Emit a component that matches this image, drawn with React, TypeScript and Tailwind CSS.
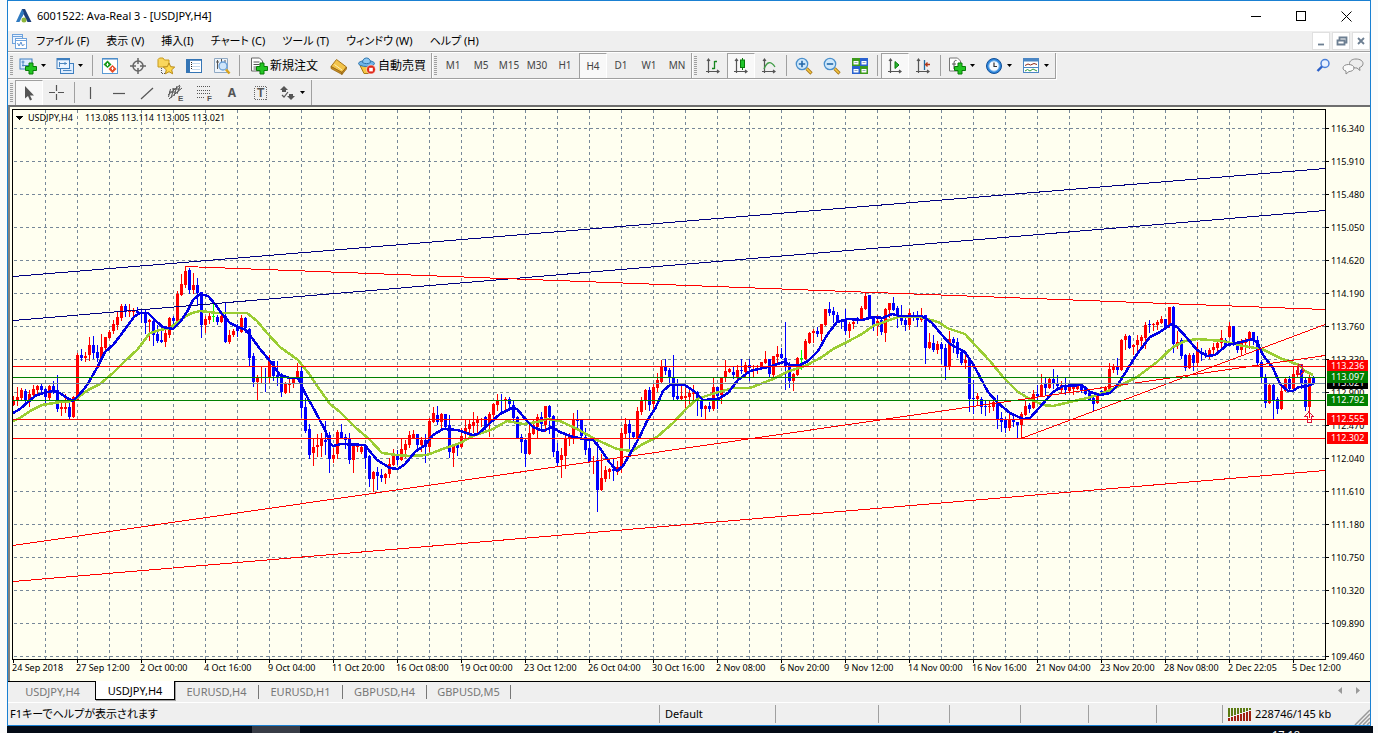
import React from 'react';

// one candle each 4px: colour (r up, b down, g doji), high, body top, body bottom, low
const CANDLES = `
r396,400,405,405 r387,397,401,405 r388,390,398,399 b389,391,401,405 r390,394,401,406 r385,389,395,395 r385,386,390,394 b383,386,390,394
b388,389,397,404 r385,386,398,399 b381,386,390,393 b375,390,409,411 r403,407,409,415 r394,407,409,412 b402,407,417,419 r396,397,417,417
r353,355,400,400 b349,355,358,360 r352,356,358,361 r337,345,355,360 b336,345,353,358 b345,352,358,361 r334,347,358,359 r337,337,348,350
r330,332,338,338 r320,324,331,333 r312,317,325,329 r304,306,318,320 b304,306,312,316 r304,310,312,316 r308,310,312,316 b307,311,313,315
b309,312,313,322 b310,314,323,333 r319,320,322,340 b317,321,335,345 b325,334,341,342 b327,340,342,342 r330,333,342,346 r317,318,335,337
b316,318,321,324 r291,294,321,322 r274,284,295,295 r266,271,285,287 b268,270,290,293 r273,285,290,293 b278,285,293,304 b292,292,325,337
r316,319,325,332 r313,316,320,323 g304,316,317,321 b315,317,322,324 r313,316,322,322 b303,316,342,342 r330,335,342,343 r329,331,335,336
b324,326,331,336 r315,318,332,332 b317,318,328,332 b328,329,358,366 b353,356,382,386 r375,378,382,400 r367,377,378,382 b368,377,378,391
r355,360,377,382 b361,361,376,380 b361,375,377,385 b373,375,392,396 r382,384,393,393 r379,383,385,392 r377,379,384,387 r363,371,379,379
b367,371,408,417 b398,407,431,432 b424,429,455,458 r439,447,453,465 r434,445,447,456 r433,438,446,456 b421,440,442,454 b432,435,459,472
r448,455,459,462 r430,432,454,458 b424,432,438,438 b434,437,440,448 b433,438,460,463 r443,446,460,472 r443,445,447,451 r445,447,452,453
b445,445,458,468 b455,456,479,486 r471,472,479,491 b467,472,476,489 b469,475,478,481 r473,474,478,483 r458,464,474,477 r449,456,465,465
b450,456,460,464 r438,449,460,460 r440,444,450,457 r431,435,445,447 r430,434,438,438 b434,434,445,451 r437,440,445,451 b434,440,447,462
r418,421,447,451 r407,413,422,422 b406,415,422,424 r413,414,422,428 b414,414,427,429 b415,425,452,457 r444,445,453,466 b445,445,448,455
r428,436,447,447 r420,428,433,440 r420,424,429,436 r412,422,426,432 r416,419,423,433 r418,419,420,426 b416,417,426,430 r412,414,424,436
r403,404,415,418 r394,400,405,410 b394,400,401,412 r397,399,400,410 b397,399,404,407 b400,405,418,420 b416,417,438,438 b434,437,442,452
b438,440,454,466 r423,433,454,454 r420,425,434,434 r414,417,427,438 b412,417,424,429 r406,406,425,431 b405,406,417,433 b415,416,452,456
b443,451,463,466 r448,455,460,477 r435,438,456,468 r433,436,438,445 r413,419,436,443 b410,419,421,430 b419,419,436,436 b428,437,450,454
b441,448,462,462 r456,461,462,473 b442,461,490,511 r454,478,490,490 r466,470,479,481 r468,469,472,478 b458,469,471,480 r461,467,472,474
r428,433,468,472 r418,424,434,438 b420,424,433,448 b432,432,437,437 r407,411,438,438 r397,400,412,414 r389,390,400,409 b387,390,405,410
r384,387,404,409 r373,380,388,391 r360,367,382,383 b359,367,371,374 b368,370,378,384 b355,377,397,399 b379,396,399,400 r384,396,399,400
r388,396,398,407 r390,393,397,403 r385,393,394,399 b391,392,400,415 b396,400,409,416 r405,406,409,419 b402,406,409,411 r378,387,409,410
b387,387,396,408 r377,378,395,403 r360,371,378,381 r368,369,372,372 b367,372,375,378 r365,370,378,378 b359,370,371,373 r362,365,372,377
b359,365,368,380 r365,369,370,376 r365,368,369,373 r362,362,368,368 r351,359,363,363 b359,359,374,377 r356,356,375,377 r346,354,357,364
b348,354,358,358 b322,358,367,389 b362,367,381,387 r373,374,381,390 r357,358,375,375 g350,358,359,369 r339,341,359,359 r332,333,343,343
r329,331,333,342 b327,331,334,336 r324,324,334,340 r309,309,325,325 b302,309,313,315 b307,311,315,322 b312,315,322,322 b319,320,322,328
b309,320,331,334 r322,324,331,337 r318,322,324,328 b317,320,321,323 r306,308,320,320 r293,296,309,309 b295,295,317,317 b316,317,326,330
r315,321,326,335 b319,320,332,334 r308,309,333,341 r303,303,310,317 b297,303,310,310 b306,308,317,327 b305,316,321,324 b317,320,325,330
r309,313,325,329 b312,315,316,320 b311,315,320,326 r308,315,320,321 b315,315,348,363 r333,342,348,348 b335,343,350,351 r341,344,350,353
b342,344,349,363 b344,348,367,379 r331,339,367,369 b337,339,343,352 b338,342,354,357 b351,352,363,364 r353,360,363,368 b358,359,399,411
b380,398,399,413 r393,396,399,404 b397,399,407,413 b400,406,407,415 r400,406,407,412 r400,402,407,410 b395,403,419,428 b412,418,422,431
b417,420,428,432 r413,419,428,430 b415,420,422,426 b422,422,425,438 r412,414,425,438 r400,406,415,415 b403,405,409,412 r390,394,408,408
b385,394,396,403 r374,385,396,396 b378,384,388,395 r377,379,388,388 b369,379,384,388 b375,383,386,390 r381,385,390,392 b377,386,390,394
r384,387,391,391 r384,387,389,394 r384,386,389,389 b384,385,390,392 b387,389,394,394 b389,393,400,400 b395,398,404,411 r395,396,403,403
b390,391,394,394 r386,388,393,393 r363,369,390,390 r364,366,370,372 b358,366,370,374 r339,340,370,370 r334,336,340,349 b335,336,348,348
r344,345,347,354 r335,340,345,350 r335,337,341,349 r322,325,338,348 b320,324,325,332 r323,324,325,330 r320,322,325,329 r316,319,323,323
b319,319,327,329 r307,307,325,327 b306,307,344,352 r331,342,344,348 b338,340,356,358 b354,355,368,370 r353,355,368,368 b353,355,363,370
r342,351,363,366 b348,352,354,360 b350,353,356,357 r348,350,357,358 r343,347,350,354 r340,343,348,352 r330,338,343,347 b338,340,345,347
r322,326,337,337 b326,326,345,345 b341,344,350,352 r339,342,350,355 r338,340,343,352 r331,332,340,348 b332,332,341,344 b336,340,363,365
b360,362,378,383 b374,378,403,407 r384,385,403,403 b384,385,400,419 b397,399,409,413 r384,391,409,409 r377,379,391,391 b376,379,389,391
r367,374,389,391 r366,370,375,376 b364,370,383,388 b378,380,407,410 r374,377,407,417 b376,377,384,384
`
  .trim()
  .split(/\s+/)
  .map((row) => {
    const [high, top, bottom, low] = row.slice(1).split(',').map(Number);
    return { color: row[0], high, top, bottom, low };
  });

const CANDLE_COLORS: Record<string, string> = { r: '#ff0000', b: '#0000ff', g: '#00ff00' };

const FAST_MA =
  '13,413 20,409 27,403 35,396 43,393 53,391 60,393 67,398 73,401 78,396 85,388 90,380 98,366 105,352 113,345 120,336 128,325 134,317 140,313 148,313 156,321 163,327 173,329 180,322 187,312 193,300 200,294 208,296 215,304 222,314 230,323 238,327 246,330 252,338 260,349 270,361 280,375 290,378 298,378 305,393 315,411 325,430 330,443 333,446 341,444 365,445 368,449 377,460 390,468 398,469 405,464 415,452 425,445 433,435 443,429 457,430 473,435 478,434 490,423 500,414 512,408 517,409 527,421 533,427 543,431 552,427 560,432 570,436 583,439 593,440 600,448 610,463 617,471 623,466 630,454 640,436 648,419 655,409 663,391 670,385 685,385 695,392 703,400 718,399 728,393 738,380 750,371 768,367 784,362 790,365 800,365 808,361 818,351 827,335 837,322 848,319 862,320 873,317 883,318 892,314 900,316 922,316 932,323 942,335 950,344 965,352 973,364 980,377 988,392 998,403 1010,413 1023,419 1030,418 1040,407 1053,392 1063,386 1082,385 1090,392 1100,395 1110,393 1117,386 1127,370 1137,354 1150,337 1160,332 1172,324 1177,327 1187,338 1197,350 1207,356 1215,355 1227,345 1237,343 1253,339 1258,344 1263,355 1273,368 1280,384 1288,391 1293,391 1299,387 1307,386 1313,384';

const SLOW_MA =
  '13,421 20,418 30,411 42,405 60,402 73,401 88,390 100,384 113,373 125,361 137,350 150,333 160,330 170,328 183,318 192,313 200,311 217,313 247,313 257,321 267,333 280,347 298,360 310,375 320,390 330,404 340,412 355,427 370,440 382,453 397,455 410,456 427,455 440,450 460,443 473,436 493,429 507,421 523,424 537,422 547,419 560,421 577,429 597,440 617,449 632,451 643,444 657,437 673,423 687,408 697,399 712,394 733,388 750,388 773,379 787,372 807,365 822,357 833,349 847,342 862,334 873,326 887,321 898,317 920,317 938,322 947,328 965,334 975,345 990,361 1003,377 1018,392 1030,399 1043,405 1053,406 1070,402 1087,398 1103,393 1117,387 1137,377 1157,362 1173,347 1185,341 1197,339 1223,341 1243,346 1262,349 1280,358 1299,365 1305,371 1313,375';

const LEVELS = [
  { y: 366, color: '#ff0000', price: '113.236' },
  { y: 383, color: '#778899', price: '113.021', tag: '#000000' },
  { y: 377, color: '#008000', price: '113.097' },
  { y: 400, color: '#008000', price: '112.792' },
  { y: 419, color: '#ff0000', price: '112.555' },
  { y: 438, color: '#ff0000', price: '112.302' },
];

const TRENDS = [
  { d: 'M13 276.5L1325 168.5', color: '#000080' },
  { d: 'M13 320.5L1325 210.5', color: '#000080' },
  { d: 'M185 266.5L1325 309.5', color: '#ff0000' },
  { d: 'M13 545.5L1325 355.5', color: '#ff0000' },
  { d: 'M13 581.5L1325 470.5', color: '#ff0000' },
  { d: 'M1021 438.5L1325 324.5', color: '#ff0000' },
];

const PRICES = [
  '116.340', '115.910', '115.480', '115.050', '114.620', '114.190', '113.760', '113.330', '112.900',
  '112.470', '112.040', '111.610', '111.180', '110.750', '110.320', '109.890', '109.460',
];

const DATES = [
  '24 Sep 2018', '27 Sep 12:00', '2 Oct 00:00', '4 Oct 16:00', '9 Oct 04:00', '11 Oct 20:00', '16 Oct 08:00',
  '19 Oct 00:00', '23 Oct 12:00', '26 Oct 04:00', '30 Oct 16:00', '2 Nov 08:00', '6 Nov 20:00', '9 Nov 12:00',
  '14 Nov 00:00', '16 Nov 16:00', '21 Nov 04:00', '23 Nov 20:00', '28 Nov 08:00', '2 Dec 22:05', '5 Dec 12:00',
];

const Chart: React.FC = () => (
  <div className="overflow-hidden bg-[#fffff0] font-['Noto_Sans',sans-serif] text-[9px]">
    <div className="flex h-[556px]">
      <svg className="h-full min-w-0 flex-1" shapeRendering="crispEdges" role="img" aria-label="USDJPY,H4">
        <g transform="translate(-10 -107)">
          {Array.from({ length: 60 }, (_, i) => (
            <path key={i} d={`M${45.5 + i * 32} 110V659`} stroke="#778899" strokeDasharray="3 3" />
          ))}
          {PRICES.map((price, i) => (
            <path key={price} d={`M14 ${128.5 + i * 33}H2000`} stroke="#778899" strokeDasharray="3 3" />
          ))}
          {CANDLES.map((c, i) => (
            <g key={i} fill={CANDLE_COLORS[c.color]}>
              <rect x={13 + i * 4} y={c.high} width="1" height={c.low - c.high + 1} />
              <rect x={12 + i * 4} y={c.top} width="3" height={Math.max(1, c.bottom - c.top)} />
            </g>
          ))}
          <polyline points={SLOW_MA} fill="none" stroke="#9acd32" strokeWidth="2.500" />
          <polyline points={FAST_MA} fill="none" stroke="#0000e6" strokeWidth="2.500" />
          {TRENDS.map((t) => (
            <path key={t.d} d={t.d} stroke={t.color} />
          ))}
          {LEVELS.map((l) => (
            <rect key={l.price} x="13" y={l.y} width="2000" height="1" fill={l.color} />
          ))}
          <path d="M1298.500 364.500h4v6h2l-4 5l-4-5h2zM1309 411.500l4 5h-2v6h-4v-6h-2z" fill="none" stroke="#dc143c" />
          <path d="M12.500 660V109.500H2000M12 659.500H2000" fill="none" stroke="#000" />
          {DATES.map((_, i) => (
            <path key={i} d={`M${13.5 + i * 64} 660v3`} stroke="#000" />
          ))}
          <path d="M16 116h7l-3.500 4z" fill="#000" />
          <text x="28" y="121" fill="#000">USDJPY,H4</text>
          <text x="85" y="121" fill="#000">113.085 113.114 113.005 113.021</text>
        </g>
      </svg>
      <svg className="h-full w-[45px] shrink-0" shapeRendering="crispEdges" role="img" aria-label="Price scale">
        <g transform="translate(0 -107)">
          <path d="M.5 109V660" stroke="#000" />
          {PRICES.map((price, i) => (
            <g key={price}>
              <path d={`M1 ${128.5 + i * 33}h3`} stroke="#000" />
              <text x="6" y={132 + i * 33} fill="#000">
                {price}
              </text>
            </g>
          ))}
          {LEVELS.map((l) => (
            <g key={l.price}>
              <rect x="2" y={l.y - 6} width="41" height="12" fill={l.tag ?? l.color} />
              <text x="6" y={l.y + 3} fill="#fff">
                {l.price}
              </text>
            </g>
          ))}
        </g>
      </svg>
    </div>
    <div className="flex h-[18px] pl-0.5 leading-[10px]">
      {DATES.map((date) => (
        <span key={date} className="w-16 shrink-0 whitespace-nowrap">
          {date}
        </span>
      ))}
    </div>
  </div>
);

/* ---- toolbar pieces ---- */

const Grip = () => (
  <span className="flex w-[7px] shrink-0 items-center pl-0.5">
    <span className="h-[19px] w-[3px] bg-[repeating-linear-gradient(#a0a0a0_0_1px,transparent_1px_2px)]" />
  </span>
);

const Sep = () => <span className="mx-[3px] my-0.5 w-px shrink-0 bg-[#a0a0a0]" />;

type ToolProps = { label: string; pressed?: boolean; children: React.ReactNode };

const Tool: React.FC<ToolProps> = ({ label, pressed, children }) => (
  <button
    type="button"
    aria-label={label}
    aria-pressed={pressed}
    className={
      pressed
        ? 'flex w-7 shrink-0 items-center justify-center border-t border-l border-r border-t-[#a0a0a0] border-l-[#a0a0a0] border-r-white bg-[#f8f8f8]'
        : 'flex w-7 shrink-0 items-center justify-center'
    }
  >
    {children}
  </button>
);

const SplitTool: React.FC<ToolProps> = ({ label, children }) => (
  <button type="button" aria-label={label} className="flex w-[37px] shrink-0 items-center gap-1 pl-1">
    {children}
    <svg className="h-[3px] w-[5px]" viewBox="0 0 5 3">
      <path d="M0 0h5L2.500 3z" fill="#000" />
    </svg>
  </button>
);

const Icon: React.FC<{ children: React.ReactNode }> = ({ children }) => (
  <svg className="h-[18px] w-[18px] shrink-0" viewBox="0 0 18 18" fill="none">
    {children}
  </svg>
);

const Plus = () => <path d="M10 6h4v3.500h3.500v4H14V17h-4v-3.500H6.500v-4H10z" fill="#22c522" stroke="#087a08" />;

const NewChartIcon = () => (
  <Icon>
    <rect x="1" y="2" width="12" height="10" fill="#dcecff" stroke="#3f7fbf" />
    <path d="M4 3.500v6M2.500 5h3M3 8.500h8" stroke="#4a86c0" />
    <Plus />
  </Icon>
);
const ProfilesIcon = () => (
  <Icon>
    <rect x="4.500" y="6.500" width="13" height="10" fill="#dcecff" stroke="#3f7fbf" />
    <rect x="1" y="1.500" width="12.500" height="10" fill="#eaf4ff" stroke="#3f7fbf" />
    <path d="M1 2.500h12" stroke="#3f7fbf" strokeWidth="1.500" />
    <path d="M3.500 5v5M3 6.500h8M9 5v3M7 13.500h8.500" stroke="#4a86c0" />
  </Icon>
);
const MarketWatchIcon = () => (
  <Icon>
    <rect x="1.500" y="1.500" width="15" height="15" fill="#fff" stroke="#5b9bd5" />
    <path d="M1.500 2h15" stroke="#3f7fbf" />
    <path d="M6.500 3.500L10.500 7.500L6.500 11L2.500 7.500z" fill="#1a9a1a" />
    <path d="M5.500 7.500h2M6.500 6v3" stroke="#fff" />
    <path d="M11.500 16L7.500 12L11.500 8L15.500 12z" fill="#e8502a" />
    <path d="M10.500 11.500h2M11.500 10v3" stroke="#fff" />
  </Icon>
);
const NavigatorIcon = () => (
  <Icon>
    <circle cx="9" cy="9" r="5" stroke="#666" strokeWidth="1.500" />
    <path d="M9 1v6M9 11v6M1 9h6M11 9h6" stroke="#666" strokeWidth="1.500" />
  </Icon>
);
const FavoritesIcon = () => (
  <Icon>
    <path d="M1 10V2.500L2.500 1H6l1.500 2H12v7z" fill="#f9d65c" stroke="#c79a1e" />
    <path d="M4.500 11v5.500H8" stroke="#555" strokeDasharray="1 1" />
    <path d="M12 6l1.700 3.700 4 .4-3 2.700.9 4-3.600-2.100-3.600 2.100.9-4-3-2.700 4-.4z" fill="#ffd84a" stroke="#b88a17" />
  </Icon>
);
const DataWindowIcon = () => (
  <Icon>
    <rect x="1.500" y="2.500" width="15" height="13" fill="#fff" stroke="#3575b5" />
    <path d="M2 3h14" stroke="#3575b5" strokeWidth="1.500" />
    <rect x="2" y="3" width="3" height="12" fill="#3575b5" />
    <path d="M7 6.500h8M7 9.500h8M7 12.500h8" stroke="#c4d9ee" />
    <path d="M6 5.500h1M6 7.500h1M6 9.500h1M6 11.500h1" stroke="#222" />
  </Icon>
);
const TesterIcon = () => (
  <Icon>
    <path d="M1.500 1.500h13v14h-13z" fill="#eef4fa" stroke="#8fa9c4" />
    <path d="M4.500 3v9M3 5h3M8.500 2v6M12 3v4" stroke="#555" />
    <circle cx="10" cy="9" r="4" fill="#cfe6fb" stroke="#6aa0d8" strokeWidth="1.300" />
    <path d="M13 12.500l3.500 4" stroke="#d9a21b" strokeWidth="2.500" />
  </Icon>
);
const OrderIcon = () => (
  <Icon>
    <path d="M1.500 1h8l3 3v10h-11z" fill="#fff" stroke="#666" />
    <path d="M3.500 5h6M3.500 7.500h6M3.500 10h3M3.500 12h3" stroke="#555" />
    <Plus />
  </Icon>
);
const EditorIcon = () => (
  <Icon>
    <path d="M1 9.500L6.500 2.500 16.500 10l-4.500 5.500z" fill="#f3c44a" stroke="#a8761a" />
    <path d="M1 9.500v2L12 17.500v-2zM12 15.500v2l4.500-5.500v-2z" fill="#c98d1f" stroke="#8f6212" strokeWidth=".7" />
    <path d="M4.500 7.500L12 13" stroke="#fff0b8" />
  </Icon>
);
const ExpertIcon = () => (
  <Icon>
    <path d="M2 8.500h13l-4 8h-5z" fill="#f5c542" stroke="#a87b16" />
    <ellipse cx="8.500" cy="6.500" rx="8" ry="3" fill="#6db3e8" stroke="#2f75ad" />
    <path d="M4.500 5.500c0-6 8-6 8 0c-2 1.500-6 1.500-8 0z" fill="#8cc8f4" stroke="#2f75ad" />
    <circle cx="13" cy="12.500" r="4.500" fill="#e02a1a" stroke="#fff" strokeWidth=".6" />
    <rect x="11.200" y="10.800" width="3.600" height="3.600" fill="#fff" />
  </Icon>
);
const Axes = () => (
  <path d="M4.500 2v14M2 14.500h13M3 4l1.500-2L6 4M13 13l2 1.500-2 1.500" stroke="#555" strokeWidth="1.200" />
);
const BarsIcon = () => (
  <Icon>
    <Axes />
    <path d="M10.500 4v8M10.500 4.500H13M8 11.500h2.500" stroke="#16851e" strokeWidth="1.300" />
  </Icon>
);
const CandlesIcon = () => (
  <Icon>
    <Axes />
    <path d="M10.500 1v12" stroke="#087a08" />
    <rect x="8.500" y="3" width="4" height="7.500" fill="#1fc42a" stroke="#087a08" />
  </Icon>
);
const LineIcon = () => (
  <Icon>
    <Axes />
    <path d="M4 12c3-8 7-8 11-2" stroke="#3f9c46" strokeWidth="1.300" />
  </Icon>
);
const ZoomIcon = ({ plus }: { plus?: boolean }) => (
  <Icon>
    <path d="M11.500 11.500l5 5" stroke="#a8761a" strokeWidth="3.200" />
    <path d="M11.500 11.500l4.500 4.500" stroke="#f5c842" strokeWidth="1.600" />
    <circle cx="7" cy="7" r="5.700" fill="#cfe8fb" stroke="#4b90cc" strokeWidth="1.300" />
    <path d={plus ? 'M3.800 7h6.400M7 3.800v6.400' : 'M3.800 7h6.400'} stroke="#2467a8" strokeWidth="1.600" />
  </Icon>
);
const TileIcon = () => (
  <Icon>
    <path d="M1 1h8v8H1zM9 9h8v8H9z" fill="#3c9a1c" />
    <path d="M9 1h8v8H9zM1 9h8v8H1z" fill="#2a62d0" />
    <path d="M2.500 4h5v3.500h-5zM10.500 4h5v3.500h-5zM2.500 12h5v3.500h-5zM10.500 12h5v3.500h-5z" fill="#fff" />
    <path d="M3.500 5.500h3M11.500 5.500h3M3.500 13.500h3M11.500 13.500h3" stroke="#9ab" />
  </Icon>
);
const AutoScrollIcon = () => (
  <Icon>
    <Axes />
    <path d="M9 4.500v7l4-3.500z" fill="#28b432" stroke="#087a08" />
  </Icon>
);
const ShiftIcon = () => (
  <Icon>
    <Axes />
    <path d="M10.500 3v10" stroke="#1e6aa0" strokeWidth="1.300" />
    <path d="M16 7.500h-4M13.500 5.500l-2 2 2 2" stroke="#b03a1a" strokeWidth="1.300" />
  </Icon>
);
const IndicatorIcon = () => (
  <Icon>
    <path d="M1.500 1h8l3 3v10h-11z" fill="#fff" stroke="#777" />
    <path d="M8.500 3.500c-2-.5-2.500 1-2.500 3v5.500M4 7h4" stroke="#555" />
    <Plus />
  </Icon>
);
const ClockIcon = () => (
  <Icon>
    <circle cx="9" cy="9" r="7.500" fill="#2d86dd" stroke="#124f96" />
    <circle cx="9" cy="9" r="5.200" fill="#f4faff" stroke="#7db6ea" />
    <path d="M9 5.500V9.500h3" stroke="#333" strokeWidth="1.200" />
  </Icon>
);
const TemplateIcon = () => (
  <Icon>
    <rect x="1.500" y="1.500" width="15" height="14" fill="#fff" stroke="#4b86c4" />
    <path d="M1 3h16" stroke="#4b86c4" strokeWidth="3" />
    <path d="M3 8.500l3-1.500 2.500 1L12 6.500l3 1" stroke="#8a2a1a" />
    <path d="M1 10.500h16" stroke="#4b86c4" />
    <path d="M3 14l2.500-1.500L8 14l3-2 4 2" stroke="#2c9a3a" />
  </Icon>
);

const Caret = () => (
  <Icon>
    <path d="M5 2v12.500l3-2.500 2 4.500 2-1-2-4h4z" fill="#555" />
  </Icon>
);
const Stroke = ({ d }: { d: string }) => (
  <Icon>
    <path d={d} stroke="#555" strokeWidth="1.200" />
  </Icon>
);
const ChannelIcon = () => (
  <Icon>
    <path d="M1 11L13 1M2 15L15 4M3.500 5l-2 8M7 4l-3 10M10 2L7 12M13 2l-3 8M2 8h7M5 5h8" stroke="#555" />
    <text x="11" y="17" className="font-['Liberation_Sans',sans-serif] text-[8px] font-bold" fill="#555">E</text>
  </Icon>
);
const FiboIcon = () => (
  <Icon>
    <path d="M2 2.500h14M2 6.500h14M2 9.500h14M2 13.500h8" stroke="#555" strokeDasharray="1 1" />
    <text x="12" y="17" className="font-['Liberation_Sans',sans-serif] text-[8px] font-bold" fill="#555">F</text>
  </Icon>
);
const LabelIcon = () => (
  <Icon>
    <rect x="3.500" y="2.500" width="12" height="13" stroke="#666" strokeDasharray="1 1" shapeRendering="crispEdges" />
    <text x="6" y="13" className="font-['Liberation_Sans',sans-serif] text-[12px] font-bold" fill="#555">T</text>
  </Icon>
);
const ArrowsIcon = () => (
  <Icon>
    <path d="M6 2l4 4H8v2H4V6H2zM13 16l-4-4h2v-2h4v2h2z" fill="#555" />
    <path d="M4 11l2 2 4-5" stroke="#555" strokeWidth="1.200" />
  </Icon>
);

const MENU = ['ファイル (F)', '表示 (V)', '挿入(I)', 'チャート (C)', 'ツール (T)', 'ウィンドウ (W)', 'ヘルプ (H)'];
const PERIODS = ['M1', 'M5', 'M15', 'M30', 'H1', 'H4', 'D1', 'W1', 'MN'];
const TABS = ['USDJPY,H4', 'USDJPY,H4', 'EURUSD,H4', 'EURUSD,H1', 'GBPUSD,H4', 'GBPUSD,M5'];

const GROUP = 'flex border-r border-b border-[#a0a0a0] shadow-[1px_1px_0_#fff]';

const App: React.FC = () => {
  return (
    <div className="bg-[#fbfbfb] pl-[7px] font-['Noto_Sans','Noto_Sans_CJK_JP',sans-serif] text-xs text-black">
      <div className="mr-[7px] border border-t border-[#1a80d2] bg-[#efefef]">
        {/* Title bar */}
        <header className="flex h-[30px] items-center bg-white pr-px pl-2">
          <svg className="h-4 w-4" viewBox="0 0 16 16">
            <path d="M6 1h3l6.500 13H11.500L7.500 6 6 9z" fill="#1d3f7a" />
            <path d="M6 1L0 14h3.500L8 5z" fill="#2f7ac0" />
            <circle cx="8" cy="12" r="2.500" fill="#8cb53a" />
          </svg>
          <h1 className="ml-[5px] flex-1 text-[11px]">6001522: Ava-Real 3 - [USDJPY,H4]</h1>
          <button type="button" aria-label="Minimize" className="flex h-full w-[45px] items-center justify-center">
            <svg className="h-[11px] w-[11px]" shapeRendering="crispEdges"><path d="M0 5.500h10" stroke="#000" /></svg>
          </button>
          <button type="button" aria-label="Maximize" className="flex h-full w-[45px] items-center justify-center">
            <svg className="h-[11px] w-[11px]" shapeRendering="crispEdges"><path d="M.5.5h9v9h-9z" fill="none" stroke="#000" /></svg>
          </button>
          <button type="button" aria-label="Close" className="flex h-full w-[45px] items-center justify-center">
            <svg className="h-[11px] w-[11px]"><path d="M.5.5l10 10M10.500.5l-10 10" stroke="#000" /></svg>
          </button>
        </header>

        {/* Menu */}
        <nav className="flex h-[21px] items-center border-b border-[#a0a0a0] pl-1">
          <svg className="mr-[9px] h-[15px] w-[15px]" viewBox="0 0 15 15" fill="none">
            <rect x=".5" y=".5" width="10" height="9" fill="#eaf3ff" stroke="#6fa3dc" />
            <rect x="3.500" y="4.500" width="11" height="10" fill="#fff" stroke="#6fa3dc" />
            <path d="M1 2.500h9M4 6.500h10" stroke="#6fa3dc" />
            <path d="M5.500 9l1.500 3 2-4 1.500 4 2-2" stroke="#5a8fd0" />
          </svg>
          <div className="flex flex-1 gap-[17px] text-[11px] [font-feature-settings:'palt']">
            {MENU.map((item) => (
              <button type="button" key={item} className="whitespace-nowrap">
                {item}
              </button>
            ))}
          </div>
          <div className="flex gap-0.5">
            {['M5 11.500h6', 'M6.500 6.500v-2h7v5h-2M4.500 7.500h7v4h-7z', 'M5 5l6 6M11 5l-6 6'].map((d, i) => (
              <button
                type="button"
                key={d}
                aria-label={['Minimize chart', 'Restore chart', 'Close chart'][i]}
                className="flex h-[18px] w-[18px] items-center justify-center border border-[#e0e0e0] bg-white"
              >
                <svg className="h-4 w-4" viewBox="0 0 16 16"><path d={d} fill="none" stroke="#6d7f92" strokeWidth="1.800" /></svg>
              </button>
            ))}
          </div>
        </nav>

        {/* Main toolbar */}
        <div className="flex h-7 border-t border-white pb-px">
          <div className={GROUP}>
            <Grip />
            <SplitTool label="New chart"><NewChartIcon /></SplitTool>
            <SplitTool label="Profiles"><ProfilesIcon /></SplitTool>
            <Sep />
            <Tool label="Market watch"><MarketWatchIcon /></Tool>
            <Tool label="Crosshair data"><NavigatorIcon /></Tool>
            <Tool label="Navigator"><FavoritesIcon /></Tool>
            <Tool label="Terminal"><DataWindowIcon /></Tool>
            <Tool label="Strategy tester"><TesterIcon /></Tool>
            <Sep />
            <button type="button" className="flex items-center gap-0.5 px-[7px]">
              <OrderIcon />
              <span>新規注文</span>
            </button>
            <Tool label="Editor"><EditorIcon /></Tool>
            <button type="button" className="flex items-center gap-0.5 px-[5px]">
              <ExpertIcon />
              <span>自動売買</span>
            </button>
          </div>
          <div className={GROUP}>
            <Grip />
            {PERIODS.map((p) => (
              <Tool key={p} label={p} pressed={p === 'H4'}>
                <span className="pt-px text-[10px] text-[#444]">{p}</span>
              </Tool>
            ))}
          </div>
          <div className={GROUP}>
            <Grip />
            <Tool label="Bar chart"><BarsIcon /></Tool>
            <Tool label="Candlesticks" pressed><CandlesIcon /></Tool>
            <Tool label="Line chart"><LineIcon /></Tool>
            <Sep />
            <Tool label="Zoom in"><ZoomIcon plus /></Tool>
            <Tool label="Zoom out"><ZoomIcon /></Tool>
            <Tool label="Tile windows"><TileIcon /></Tool>
            <Sep />
            <Tool label="Auto scroll" pressed><AutoScrollIcon /></Tool>
            <Tool label="Chart shift"><ShiftIcon /></Tool>
            <Sep />
            <SplitTool label="Indicators"><IndicatorIcon /></SplitTool>
            <SplitTool label="Periods"><ClockIcon /></SplitTool>
            <SplitTool label="Templates"><TemplateIcon /></SplitTool>
          </div>
          <div className="ml-auto flex gap-0.5 pr-[3px]">
            <Tool label="Search">
              <Icon>
                <circle cx="11" cy="6.500" r="4" fill="#e8f1ff" stroke="#4a7fd8" strokeWidth="1.500" />
                <path d="M8 9.500L3.500 14" stroke="#2a5fc8" strokeWidth="2.400" />
              </Icon>
            </Tool>
            <Tool label="Chat">
              <svg className="h-[18px] w-[22px]" viewBox="0 0 22 18">
                <path d="M14 2c4 0 7 1.800 7 4.500 0 2-1.500 3.500-3.500 4l.5 3-3-2.500c-5 0-7.500-2-7.500-4.500S10 2 14 2z" fill="#ededed" stroke="#8a8a8a" />
                <path d="M6.500 7.500c3 0 5.500 1.300 5.500 3.500s-2.500 3.500-5 3.500L4 17v-3c-2-.5-3-1.500-3-3 0-2.200 2.500-3.500 5.500-3.500z" fill="#fafafa" stroke="#8a8a8a" />
              </svg>
            </Tool>
          </div>
        </div>

        {/* Drawing toolbar */}
        <div className="flex h-[25px]">
          <div className="flex border-r border-[#a0a0a0]">
            <Grip />
            <Tool label="Cursor" pressed><Caret /></Tool>
            <Tool label="Crosshair"><Stroke d="M8.500 1v6M8.500 10v6M1 8.500h6M10 8.500h6" /></Tool>
            <Sep />
            <Tool label="Vertical line"><Stroke d="M7.500 3v12" /></Tool>
            <Tool label="Horizontal line"><Stroke d="M2 9.500h12" /></Tool>
            <Tool label="Trendline"><Stroke d="M2 15L14 4" /></Tool>
            <Tool label="Channel"><ChannelIcon /></Tool>
            <Tool label="Fibonacci"><FiboIcon /></Tool>
            <Tool label="Text"><span className="text-xs font-bold text-[#555]">A</span></Tool>
            <Tool label="Text label"><LabelIcon /></Tool>
            <SplitTool label="Arrows"><ArrowsIcon /></SplitTool>
          </div>
        </div>

        {/* Chart window */}
        <main className="border-t-2 border-l-2 border-t-[#6e6e6e] border-l-[#808080]">
          <Chart />
        </main>

        {/* Chart tabs */}
        <div className="flex h-[21px] border-t border-t-black pl-[3px] text-[11px]">
          {TABS.map((tab, i) => (
            <button
              type="button"
              key={i}
              className={
                i === 1
                  ? '-mt-px mb-0.5 w-20 shrink-0 border border-t-0 border-black bg-white pt-0.5 text-black shadow-[1px_1px_0_#a0a0a0]'
                  : 'my-[3px] w-[84px] shrink-0 border-r border-[#777] text-[#777] first:border-transparent'
              }
            >
              {tab}
            </button>
          ))}
          <div className="ml-auto flex items-center gap-[14px] pr-2.5 pb-1">
            <svg className="h-[7px] w-1" viewBox="0 0 4 7"><path d="M4 0v7L0 3.500z" fill="#999" /></svg>
            <svg className="h-[7px] w-1" viewBox="0 0 4 7"><path d="M0 0v7l4-3.500z" fill="#999" /></svg>
          </div>
        </div>

        {/* Status bar */}
        <footer className="flex h-[23px] items-stretch border-t border-white text-[11px] [&>span]:my-0.5 [&>span]:flex [&>span]:shrink-0 [&>span]:items-center [&>span]:border-l [&>span]:border-[#a0a0a0]">
          <p className="flex flex-1 items-center pl-0.5 [font-feature-settings:'palt']">F1キーでヘルプが表示されます</p>
          <span className="w-[116px] pl-[5px]">Default</span>
          <span className="w-[103px]" />
          <span className="w-[71px]" />
          <span className="w-[71px]" />
          <span className="w-[68px]" />
          <span className="w-[68px]" />
          <span className="w-[66px]" />
          <span className="w-[132px] gap-1 pl-[5px]">
            <svg className="h-[13px] w-[23px]" shapeRendering="crispEdges">
              {Array.from({ length: 8 }, (_, i) => (
                <g key={i}>
                  <rect x={i * 3} y="0" width="2" height={9 - i} fill="#5a7a10" />
                  <rect x={i * 3} y={10 - i} width="2" height={3 + i} fill="#a02010" />
                </g>
              ))}
            </svg>
            228746/145 kb
          </span>
          <svg className="h-full w-4 shrink-0" viewBox="0 0 16 22">
            <path d="M1 22L16 7M5 22L16 11M9 22l7-7M13 22l3-3" stroke="#999" strokeWidth="1.500" />
          </svg>
        </footer>
      </div>

      {/* Desktop taskbar */}
      <div className="mr-[5px] flex h-[7px] justify-between overflow-hidden bg-[#040b16]">
        <span className="ml-[245px] w-12 bg-[#383c46]" />
        <span className="mr-[73px] pt-[3px] text-[11px] leading-3 text-white">17:18</span>
      </div>
    </div>
  );
};

export default App;
